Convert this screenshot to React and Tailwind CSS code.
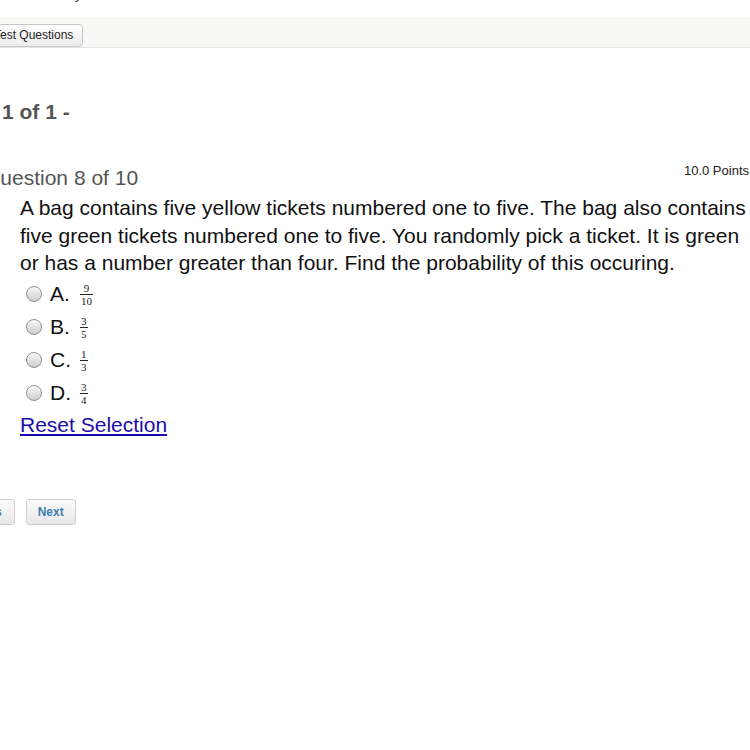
import React from 'react';

const options = [
  { letter: 'A.', num: '9', den: '10' },
  { letter: 'B.', num: '3', den: '5' },
  { letter: 'C.', num: '1', den: '3' },
  { letter: 'D.', num: '3', den: '4' },
];

const Radio = () => (
  <span className="w-[16px] h-[16px] rounded-full border border-[#8f8f8f] bg-gradient-to-b from-[#f6f6f6] to-[#cfcfcf] shadow-[inset_0_1px_1px_rgba(255,255,255,0.9)] shrink-0" />
);

const Fraction = ({ num, den }) => (
  <span className="inline-flex flex-col items-center font-['Liberation_Serif',serif] text-[11px] leading-[10px] text-[#222]">
    <span className="px-[1px] pb-[1px]">{num}</span>
    <span className="border-t border-[#222] px-[1px] pt-[1px] w-full text-center">{den}</span>
  </span>
);

export default function App() {
  return (
    <div className="w-[750px] h-[750px] overflow-hidden bg-white font-['Liberation_Sans',Arial,sans-serif] text-[#222]">
      {/* top clipped line */}
      <div className="h-[17px] overflow-hidden">
        <div className="-mt-[14px] pl-[22px] text-[14px] leading-[17px] text-[#444]">Summary</div>
      </div>

      {/* toolbar */}
      <div className="h-[31px] bg-[#f8f8f6] border-b border-[#e6e6e6] pt-[5px]">
        <button className="-ml-[16px] h-[23px] px-[9px] rounded-[4px] border border-[#c8c8c8] bg-gradient-to-b from-[#ffffff] to-[#ececec] text-[12px] leading-[21px] text-[#222]">
          Test Questions
        </button>
      </div>

      {/* page label */}
      <div className="mt-[52px] -ml-[54px] text-[21px] leading-[24px] font-bold text-[#555]">Page 1 of 1 -</div>

      {/* question */}
      <div className="-ml-[16px] mt-[42px] w-[766px]">
        <div className="flex justify-between items-start pr-[1px]">
          <span className="text-[21px] leading-[24px] text-[#555]">Question 8 of 10</span>
          <span className="text-[13px] leading-[16px] -mt-[3px]">10.0 Points</span>
        </div>

        <div className="pl-[36px]">
          <p className="w-[732px] text-[21px] leading-[27.5px] text-[#111] mt-[4px]">
            A bag contains five yellow tickets numbered one to five. The bag also contains five green tickets numbered one to five. You randomly pick a ticket. It is green or has a number greater than four. Find the probability of this occuring.
          </p>

          <div className="flex flex-col mt-[1px]">
            {options.map(o => (
              <label key={o.letter} className="flex items-center h-[33px] pl-[6px]">
                <Radio />
                <span className="ml-[8px] text-[21px] leading-[24px] text-[#111] w-[30px]">{o.letter}</span>
                <Fraction num={o.num} den={o.den} />
              </label>
            ))}
          </div>

          <a href="#" className="block w-fit mt-[2px] text-[21px] leading-[26px] text-[#1a0dab] underline underline-offset-[2px]">
            Reset Selection
          </a>
        </div>
      </div>

      {/* nav buttons */}
      <div className="flex gap-[11px] mt-[61px] -ml-[62px]">
        <button className="h-[26px] px-[12px] rounded-[3px] border border-[#d0d0d0] bg-gradient-to-b from-[#fafafa] to-[#e8e8e8] text-[12px] font-bold text-[#3d7eb3]">
          Previous
        </button>
        <button className="h-[26px] w-[50px] rounded-[3px] border border-[#d0d0d0] bg-gradient-to-b from-[#fafafa] to-[#e8e8e8] text-[12px] font-bold text-[#3d7eb3]">
          Next
        </button>
      </div>
    </div>
  );
}
